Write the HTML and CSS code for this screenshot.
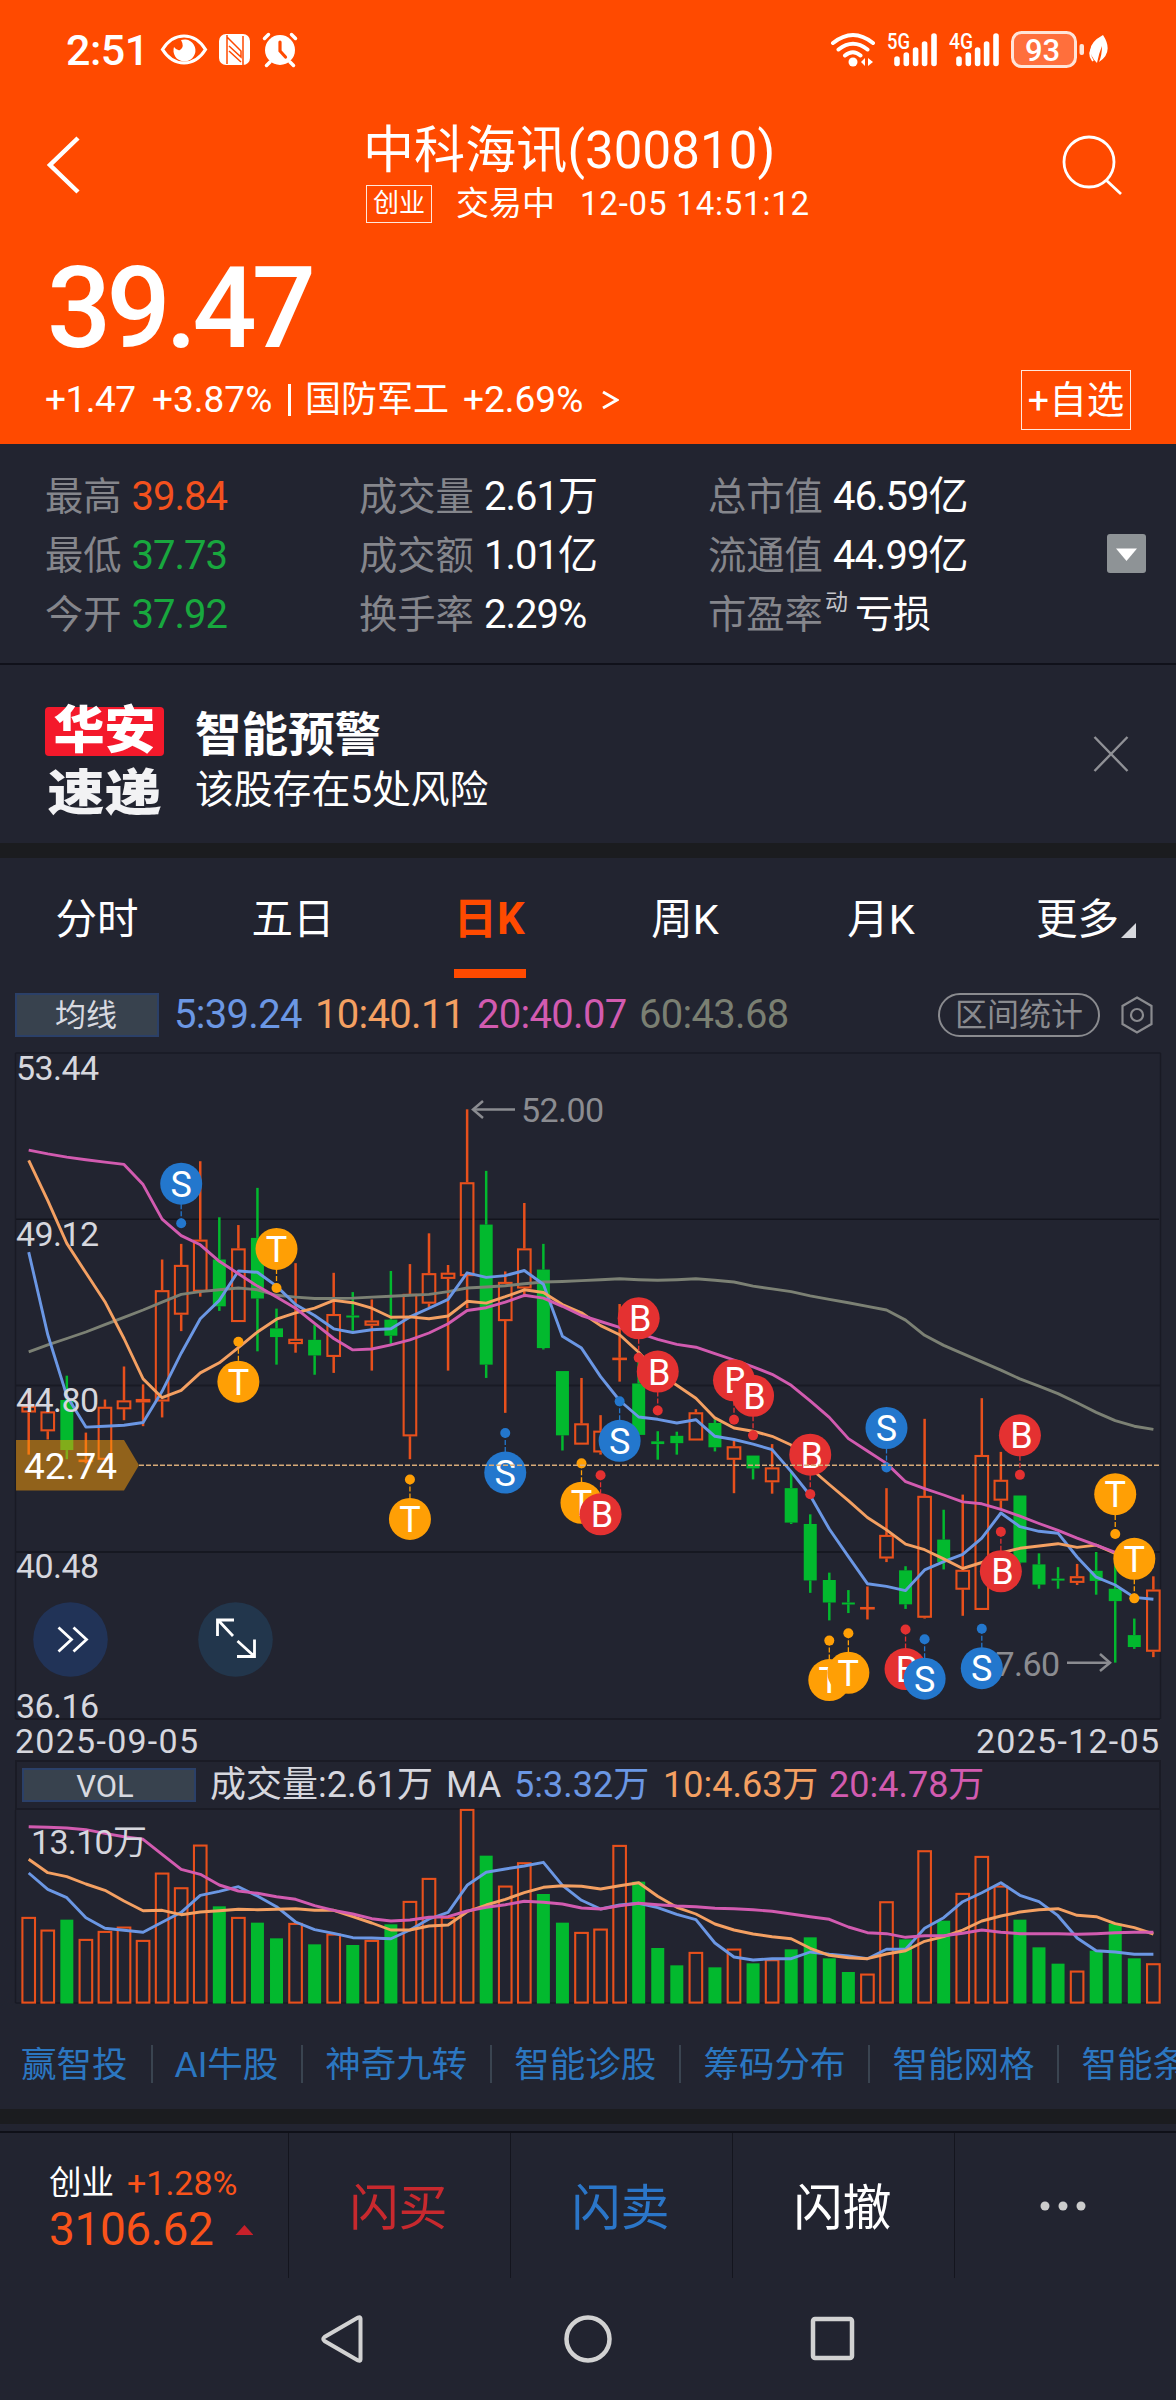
FILE: index.html
```html
<!DOCTYPE html>
<html lang="zh-CN">
<head>
<meta charset="utf-8">
<title>中科海讯(300810)</title>
<link rel="stylesheet" href="styles.css">
</head>
<body>
<header class="hero">
  <div class="statusbar">
    <span class="clock">2:51</span>
    <svg class="status-left" width="140" height="36" viewBox="158 32 140 36">
      <path d="M162.500 49.500Q171 36 184 36Q197 36 205.500 49.500Q197 63 184 63Q171 63 162.500 49.500Z" fill="none" stroke="#fff" stroke-width="3.200"/>
      <path d="M181 40a11 11 0 1 1-7 7q3 4 6 3 5-3 1-10z" fill="#fff"/>
      <rect x="219" y="34" width="31" height="31" rx="7" fill="#fff"/>
      <path d="M227 35V64M227 37L241 51V57L229 46M243 65V36M241 62L229 51" fill="none" stroke="#ff4a00" stroke-width="1.500"/>
      <circle cx="280" cy="50" r="15" fill="#fff"/>
      <path d="M264.500 38.500l4-4M295.500 38.500l-4-4M270 62l-3.500 3.500M290 62l3.500 3.500" stroke="#fff" stroke-width="3.500" stroke-linecap="round"/>
      <path d="M280 42v9l5.500 6" fill="none" stroke="#ff4a00" stroke-width="3.200" stroke-linecap="round"/>
    </svg>
    <svg class="status-right" width="280" height="40" viewBox="830 30 280 40">
      <g fill="none" stroke="#fff" stroke-width="4" stroke-linecap="round">
        <path d="M834 43Q854 27 874 43M839.500 49.500Q854 38 868.500 49.500M846 55.500Q854 49 861.500 55.500"/>
      </g>
      <circle cx="854" cy="62" r="4.500" fill="#fff"/>
      <path d="M862 62l4-4v8zM869 58l5 4-5 4z" fill="#fff"/>
      <g stroke="#fff" stroke-width="5.600" stroke-linecap="round">
        <path d="M898 59v4.500M907.300 55v8.500M916.600 50v13.500M925.600 44v19.500M935 36v27.500"/>
        <path d="M960 59v4.500M969.300 55v8.500M978.600 50v13.500M987.600 44v19.500M997 36v27.500"/>
      </g>
      <text class="net" x="888" y="48.500" textLength="23" lengthAdjust="spacingAndGlyphs">5G</text>
      <text class="net" x="950" y="48.500" textLength="24" lengthAdjust="spacingAndGlyphs">4G</text>
      <rect x="1013.500" y="32.500" width="63" height="34" rx="9" fill="#ff6f3c" stroke="#ffe4d8" stroke-width="3"/>
      <rect x="1080.500" y="44" width="4.500" height="11" rx="2" fill="#ffe4d8"/>
      <text class="battery" x="1026" y="61" textLength="35">93</text>
      <path d="M1104 35Q1082 47 1098 63Q1100 53 1103 46Q1103 55 1100 62Q1115 52 1104 35Z" fill="#fff"/>
      <path d="M1095 46Q1088 53 1094 61" fill="none" stroke="#fff" stroke-width="2"/>
    </svg>
  </div>
  <div class="titlebar">
    <svg class="back" width="40" height="60" viewBox="0 0 40 60"><path d="M33 3L5 30L33 57" fill="none" stroke="#fff" stroke-width="4.500"/></svg>
    <div class="title-block">
      <div class="title">中科海讯(300810)</div>
      <div class="subtitle"><span class="board">创业</span><span class="state">交易中</span><span class="time">12-05 14:51:12</span></div>
    </div>
    <svg class="search" width="62" height="62" viewBox="0 0 62 62"><circle cx="27" cy="27" r="25" fill="none" stroke="#fff" stroke-width="2.800"/><path d="M44 45L59 59" stroke="#fff" stroke-width="2.800"/></svg>
  </div>
  <div class="price">39.47</div>
  <div class="change">
    <span class="c-abs">+1.47</span><span class="c-pct">+3.87%</span><i class="bar"></i><span class="sector">国防军工</span><span class="c-sec">+2.69%</span>
    <svg width="18" height="22" viewBox="0 0 18 22"><path d="M2 3L16 11L2 19" fill="none" stroke="#fff" stroke-width="3"/></svg>
    <button class="add">+自选</button>
  </div>
</header>

<section class="stats">
  <dl><dt>最高</dt><dd class="up">39.84</dd></dl><dl><dt>成交量</dt><dd>2.61万</dd></dl><dl><dt>总市值</dt><dd>46.59亿</dd></dl>
  <dl><dt>最低</dt><dd class="down">37.73</dd></dl><dl><dt>成交额</dt><dd>1.01亿</dd></dl><dl><dt>流通值</dt><dd>44.99亿</dd></dl>
  <dl><dt>今开</dt><dd class="down">37.92</dd></dl><dl><dt>换手率</dt><dd>2.29%</dd></dl><dl><dt>市盈率</dt><dd class="pe"><sup>动</sup>亏损</dd></dl>
  <svg class="toggle" width="39" height="39" viewBox="0 0 39 39"><rect width="39" height="39" rx="3" fill="#8e9396"/><path d="M9 14.500H30L19.500 27Z" fill="#fff"/></svg>
</section>

<section class="alert">
  <div class="logo"><span class="logo-top">华安</span><span class="logo-bottom">速递</span></div>
  <div class="alert-text"><strong>智能预警</strong><p>该股存在5处风险</p></div>
  <svg width="36" height="36" viewBox="0 0 36 36"><path d="M1.500 1L34.500 35M34.500 1L1.500 35" stroke="#909196" stroke-width="2.400"/></svg>
</section>
<div class="band"></div>

<nav class="tabs">
  <a>分时</a><a>五日</a><a class="active">日K</a><a>周K</a><a>月K</a><a class="more">更多<svg width="15" height="15" viewBox="0 0 15 15"><path d="M15 0V15H0Z" fill="#d8d9de"/></svg></a>
</nav>

<div class="ma-row">
  <span class="chip">均线</span>
  <span class="ma m5">5:39.24</span><span class="ma m10">10:40.11</span><span class="ma m20">20:40.07</span><span class="ma m60">60:43.68</span>
  <span class="pill">区间统计</span>
  <svg width="34" height="40" viewBox="0 0 34 40"><path d="M17 2.500L31.500 11V29L17 37.500L2.500 29V11Z" fill="none" stroke="#8a8b8f" stroke-width="2.200"/><circle cx="17" cy="20" r="6" fill="none" stroke="#8a8b8f" stroke-width="2.200"/></svg>
</div>

<svg id="kline" class="chart" width="1176" height="723" viewBox="0 1037 1176 723"></svg>

<div class="vol-row">
  <span class="chip">VOL</span>
  <span class="v v0">成交量:2.61万</span><span class="v vm">MA</span><span class="v m5">5:3.32万</span><span class="v m10">10:4.63万</span><span class="v m20">20:4.78万</span>
</div>
<svg id="volume" class="chart" width="1176" height="196" viewBox="0 1810 1176 196"></svg>

<div class="tools">
  <a>赢智投</a><a>AI牛股</a><a>神奇九转</a><a>智能诊股</a><a>筹码分布</a><a>智能网格</a><a>智能条</a>
</div>
<div class="band"></div>

<footer class="trade">
  <div class="index">
    <div class="index-top"><span>创业</span><span class="pct">+1.28%</span></div>
    <div class="index-value"><span>3106.62</span><i></i></div>
  </div>
  <a class="buy">闪买</a><a class="sell">闪卖</a><a>闪撤</a>
  <a class="dots"><svg width="46" height="10" viewBox="0 0 46 10"><g fill="#ccc"><circle cx="5" cy="5" r="4.500"/><circle cx="23" cy="5" r="4.500"/><circle cx="41" cy="5" r="4.500"/></g></svg></a>
</footer>
<div class="sysnav">
  <svg width="46" height="52" viewBox="0 0 46 52"><path d="M40.500 5.500V46.500Q40.500 48.500 38 47.500L4.500 28Q2 26 4.500 24L38 4.500Q40.500 3.500 40.500 5.500Z" fill="none" stroke="#d2d2d2" stroke-width="4"/></svg>
  <svg width="52" height="52" viewBox="0 0 52 52"><circle cx="26" cy="26" r="21.500" fill="none" stroke="#d2d2d2" stroke-width="4.500"/></svg>
  <svg width="46" height="46" viewBox="0 0 46 46"><rect x="3" y="3" width="39" height="39" rx="2" fill="none" stroke="#d2d2d2" stroke-width="4.500"/></svg>
</div>
<script src="chart.js"></script>
</body>
</html>
```
FILE: styles.css
```css
* { box-sizing: border-box; }
body {
  margin: 0;
  width: 1176px;
  height: 2400px;
  overflow: hidden;
  background: #222430;
  color: #fff;
  font-family: Roboto, "Noto Sans CJK SC", sans-serif;
}
svg { display: block; flex: none; }
dl, dd, p { margin: 0; }
span, a, dt, dd { white-space: nowrap; }

.hero { height: 444px; background: #ff4a00; }
.statusbar { display: flex; height: 100px; padding: 28px 67px 0 66px; }
.clock { width: 92px; font-size: 43px; line-height: 44px; letter-spacing: -0.5px; font-weight: 500; }
.status-left { margin-top: 4px; }
.status-right { margin: 2px 0 0 auto; }
.net { font-size: 22px; font-weight: 500; fill: #fff; }
.battery { font-size: 31px; font-weight: 500; fill: #fff; }

.titlebar { display: flex; align-items: flex-start; height: 124px; padding: 21px 52px 0 45px; }
.back { margin-top: 14px; }
.title-block { flex: 1; padding-left: 278px; }
.title { font-size: 51px; line-height: 60px; letter-spacing: 0.1px; }
.subtitle { display: flex; align-items: center; height: 38px; margin: 4px 0 0 3px; font-size: 33px; line-height: 38px; }
.board { width: 66px; height: 38px; border: 1.500px solid #ffe8dc; font-size: 26px; line-height: 35px; text-align: center; }
.state { margin-left: 24px; }
.time { margin-left: 25px; letter-spacing: 0.8px; }
.search { margin-top: 14px; }

.price { margin-top: 25px; padding-left: 47px; font-size: 113px; line-height: 120px; font-weight: 500; letter-spacing: -4.800px; }
.change { display: flex; align-items: center; height: 60px; margin-top: 1px; padding: 0 45px; font-size: 37px; line-height: 60px; }
.c-abs { width: 107px; letter-spacing: -0.5px; }
.c-pct { width: 136px; letter-spacing: 0; }
.bar { width: 3px; height: 32px; background: #fff; }
.sector { width: 158px; margin-left: 14px; font-size: 36px; }
.c-sec { width: 138px; letter-spacing: 0; }
.add { width: 110px; height: 60px; margin-left: auto; padding: 0; border: 1.500px solid #ffe8dc; background: none; color: #fff; font: inherit; font-size: 37.500px; line-height: 57px; white-space: nowrap; }

.stats {
  position: relative;
  display: grid;
  grid-template-columns: 314px 349px 1fr;
  grid-auto-rows: 59px;
  height: 221px;
  padding: 23px 45px 0;
  border-bottom: 2px solid #10111a;
  line-height: 59px;
}
.stats dl { display: flex; font-size: 40px; }
.stats dt { margin-right: 10px; font-size: 38.300px; color: #85868c; }
.stats dd { letter-spacing: -1px; }
.stats .up { color: #f4511e; }
.stats .down { color: #18a83e; }
.stats .pe { display: flex; margin-left: -8px; letter-spacing: 0; font-size: 38px; }
.stats sup { margin-right: 7px; font-size: 23px; line-height: 36px; color: #c4c5ca; }
.toggle { position: absolute; right: 30px; top: 90px; }

.alert { display: flex; height: 178px; padding: 42px 46px 0 45px; }
.alert > svg { margin: 29px 1px 0 auto; }
.logo { display: flex; flex-direction: column; gap: 12px; width: 119px; margin-right: 31px; font-weight: 900; text-align: center; }
.logo-top { height: 49px; border-radius: 4px; background: #f4192b; font-size: 51px; line-height: 48px; }
.logo-top, .logo-bottom { text-align: center; }
.logo-bottom { font-size: 57px; line-height: 50px; color: #f2f2f4; transform: translateY(1px) scaleY(.86); }
.alert-text strong { display: block; font-size: 46.500px; line-height: 56px; font-weight: 700; }
.alert-text p { font-size: 38.800px; line-height: 54px; }
.band { height: 15px; background: #1b1c1f; }

.tabs { display: grid; grid-template-columns: repeat(6, 196px); height: 120px; font-size: 41.500px; line-height: 60px; text-align: center; }
.tabs a { display: flex; flex-direction: column; align-items: center; padding: 32px 2px 0 0; }
.tabs .active { color: #ff4a00; font-weight: 700; font-size: 43.500px; }
.tabs .active::after { content: ""; width: 72px; height: 9px; margin: 19px 0 0 2px; background: #ff4a00; }
.tabs .more { flex-direction: row; align-items: flex-start; padding-left: 56px; }
.more svg { margin: 33px 0 0 2px; }

.chip { border: 2px solid #2b4068; background: #38424e; color: #d8dae0; text-align: center; }
.ma-row { display: flex; align-items: center; height: 44px; margin-top: 15px; padding: 0 22px 0 15px; font-size: 40px; line-height: 48px; }
.ma-row .chip { width: 144px; height: 44px; margin-right: 15px; padding-right: 2px; font-size: 31px; line-height: 42px; }
.ma { letter-spacing: -0.7px; }
.ma.m5 { width: 141px; }
.ma.m10, .ma.m20 { width: 162px; }
.m5 { color: #6b97e4; }
.m10 { color: #f4a062; }
.m20 { color: #d25bb0; }
.m60 { color: #7a7f72; }
.pill { width: 162px; height: 44px; margin: 0 20px 0 auto; border: 2.500px solid #8a8b8f; border-radius: 22px; color: #8a8b8f; font-size: 32px; line-height: 41px; text-align: center; }

.chart { overflow: visible; }
.axis { font-size: 34px; fill: #d6d7de; }
.peak { font-size: 34px; fill: #8b8c91; }
.tag { font-size: 37px; fill: #fff; }
.marker { font-size: 36px; fill: #fff; text-anchor: middle; }

.vol-row { display: flex; align-items: center; height: 50px; margin: 0 15px 0 15px; border: 2px solid #1a1b25; font-size: 36px; line-height: 48px; }
.vol-row .chip { width: 174px; height: 34px; margin: 0 14px 0 5px; padding-right: 8px; font-size: 31px; line-height: 33px; }
.v { letter-spacing: 0; }
.vol-row .v0, .vol-row .vm { color: #d6d7de; }
.v0 { width: 236px; }
.vm { width: 68px; }
.vol-row .m5 { width: 149px; }
.vol-row .m10 { width: 166px; }

.tools { display: flex; height: 38px; margin: 39px 0 26px; overflow: hidden; font-size: 35.500px; line-height: 40px; color: #2b76c0; }
.tools a { padding: 0 23px 0 22px; border-right: 2.500px solid #3a4450; }
.tools a:first-child { padding-left: 21px; }

.trade { display: grid; grid-template-columns: 288px 222px 222px 222px 222px; height: 147px; margin-top: 7px; border-top: 2px solid #0f1018; }
.trade > a { display: flex; align-items: center; justify-content: center; padding: 0 2px 5px 0; border-left: 1px solid #14151e; font-size: 49px; }
.trade .dots { padding: 0 5px 0 0; }
.trade .buy { color: #c8292e; }
.trade .sell { color: #2b76c8; }
.index { padding: 27px 0 0 49px; color: #f9531a; }
.index-top { display: flex; height: 46px; font-size: 34px; line-height: 46px; letter-spacing: 0; }
.index-top span:first-child { width: 78px; color: #fff; font-size: 32.500px; }
.index-value { display: flex; height: 46px; font-size: 46px; line-height: 46px; letter-spacing: -0.4px; }
.index-value i { margin: 19px 0 0 22px; width: 18px; height: 10px; background: #c8202a; clip-path: polygon(50% 0, 100% 100%, 0 100%); }

.sysnav { display: flex; align-items: center; justify-content: space-between; height: 122px; padding: 0 320px 0 320px; }
```
FILE: chart.js
```js
// Horizontal position of the n-th trading day
const X0 = 28.7, STEP = 19.062;
const xAt = i => X0 + STEP * i;
// Vertical plot units to pixels, for the price and the volume pane
const priceY = v => 1040 + v / 2.1778;
const volY = v => 1740 + v / 3;

const UP = '#e8501c', DOWN = '#02b92e';
const COLORS = { ma5: '#6b97e4', ma10: '#f4a062', ma20: '#d25bb0', ma60: '#7c8174' };
const MARKS = { S: '#2377cd', T: '#ff9f05', B: '#e43131' };
const GRID = '#191a24';

// [rising, body top, body bottom, high, low]
const candles = [
[1,797,811,765,903],[1,809,852,809,870],[0,784,893,731,913],[1,914,918,855,922],[1,799,914,783,914],
[1,785,804,711,828],[1,782,789,750,841],[1,545,787,478,822],[1,490,598,444,634],[1,435,548,264,559],
[0,478,580,386,590],[1,454,614,403,614],[0,431,563,322,678],[0,628,647,585,707],[1,651,662,486,681],
[0,653,687,620,729],[1,597,690,507,725],[0,600,603,549,633],[1,611,622,565,720],[0,609,644,503,662],
[1,553,863,488,913],[1,508,574,421,582],[1,507,520,490,720],[1,310,514,151,584],[0,402,707,285,736],
[1,527,612,504,812],[1,454,541,355,560],[0,500,671,444,674],[0,721,861,721,894],[1,835,881,736,881],
[1,851,898,817,903],[1,692,695,575,744],[0,748,860,690,860],[0,874,880,852,914],[0,862,878,853,903],
[1,811,872,804,872],[0,834,887,826,896],[1,885,914,873,987],[0,905,933,905,957],[1,931,963,880,988],
[0,976,1051,940,1054],[0,1054,1177,1033,1204],[0,1176,1225,1160,1264],[0,1225,1229,1198,1248],[1,1235,1239,1190,1262],
[1,1078,1129,976,1137],[0,1155,1229,1146,1239],[1,993,1258,825,1260],[0,1088,1137,1023,1153],[1,1154,1197,990,1254],
[1,904,1241,780,1241],[1,958,1003,897,1022],[0,992,1138,992,1140],[0,1142,1186,1118,1195],[0,1173,1177,1148,1195],
[1,1168,1182,1141,1187],[0,1156,1178,1115,1208],[0,1195,1222,1140,1356],[0,1296,1322,1260,1326],[1,1197,1332,1168,1344]];

const priceMA = {
ma60: [679,664,650,636,620,604,588,571,554,548,544,540,544,556,560,563,563,562,560,558,556,554,548,540,538,535,531,527,526,524,522,520,522,523,522,520,523,527,536,542,548,557,565,572,580,588,610,643,665,683,701,719,738,754,770,790,811,829,841,848],
ma5: [462,642,775,843,841,839,833,765,682,607,567,503,506,536,576,600,629,637,631,629,603,584,565,507,517,513,502,532,645,671,733,785,821,826,834,827,863,870,880,892,940,992,1065,1125,1184,1190,1199,1154,1136,1120,1085,1030,1060,1070,1074,1126,1170,1187,1214,1218],
ma10: [262,350,443,507,570,650,738,779,763,725,703,670,636,608,594,584,567,572,584,604,603,607,601,569,573,559,544,550,576,594,622,642,680,725,752,780,823,845,852,863,882,932,968,1003,1040,1067,1098,1110,1130,1151,1138,1117,1107,1102,1097,1105,1100,1118,1135,1146],
ma20: [240,248,255,261,266,271,315,390,426,446,482,509,536,560,584,617,650,675,673,664,653,638,618,589,583,571,556,562,580,600,613,626,638,652,663,669,683,697,712,728,752,786,822,868,895,922,962,977,991,1006,1010,1022,1037,1053,1068,1085,1100,1116,1135,1149]
};

// [day, letter, badge height, dot height]
const markers = [[8,'S',313,399],[11,'T',744,657],[13,'T',455,540],[20,'T',1043,957],[25,'S',942,856],[29,'T',1008,922],[30,'B',1033,948],[31,'S',873,787],[32,'B',606,692],[33,'B',722,807],[37,'B',741,827],[38,'B',775,861],[41,'B',903,989],[42,'T',1394,1308],[43,'T',1378,1292],[45,'S',845,931],[46,'B',1370,1284],[47,'S',1391,1305],[50,'S',1368,1282],[51,'B',1157,1071],[52,'B',861,947],[57,'T',989,1076],[58,'T',1130,1216]];

const volumes = [533,571,541,599,575,562,602,400,444,316,501,533,550,597,551,615,583,617,602,555,485,416,533,209,349,439,369,464,550,578,568,317,427,626,678,638,684,628,672,660,630,594,657,698,703,486,600,333,544,461,350,439,541,624,673,694,634,553,657,672];
const volMA = {
ma5: [399,448,473,533,565,571,577,547,517,466,454,440,468,500,546,569,580,593,594,596,570,537,517,436,397,387,378,367,436,481,507,495,490,503,523,539,609,651,660,656,656,636,643,648,656,628,628,565,533,485,458,428,466,485,527,594,632,636,643,643],
ma10: [358,398,410,432,451,483,512,511,524,516,512,508,509,508,506,511,511,530,549,570,570,558,555,515,495,478,458,442,437,439,447,437,428,469,502,522,552,570,582,590,596,625,646,653,656,642,632,604,590,570,543,528,516,509,506,526,530,551,563,582],
ma20: [260,262,264,269,280,290,298,343,388,403,435,453,460,470,478,497,511,522,536,543,540,532,530,513,502,494,484,487,492,504,507,497,490,494,498,500,505,506,509,514,522,530,538,561,578,581,592,587,587,580,570,577,581,581,581,583,581,578,577,577]
};

const line = (x1, y1, x2, y2, c, w, extra = '') => `<path d="M${x1} ${y1}L${x2} ${y2}" stroke="${c}" stroke-width="${w}" fill="none" ${extra}/>`;
const text = (x, y, cls, s, len) => `<text x="${x}" y="${y}" class="${cls}"${len ? ` textLength="${len}"` : ''}>${s}</text>`;
const curve = (vals, toY, c) => `<polyline points="${vals.map((v, i) => xAt(i).toFixed(1) + ',' + toY(v).toFixed(1)).join(' ')}" fill="none" stroke="${c}" stroke-width="2.900" stroke-linejoin="round"/>`;
function box(rising, x, y1, y2) {
  return rising
    ? `<rect x="${x - 6.3}" y="${y1 + .9}" width="12.600" height="${Math.max(y2 - y1 - 1.8, .5)}" fill="none" stroke="${UP}" stroke-width="2.100"/>`
    : `<rect x="${x - 6.5}" y="${y1}" width="13" height="${Math.max(y2 - y1, 2)}" fill="${DOWN}"/>`;
}

let k = line(15.5, 1053, 1160.5, 1053, GRID, 1.5) + line(15.5, 1219.2, 1159, 1219.2, '#13141d', 1.5) + line(15.5, 1385.5, 1160, 1385.5, GRID, 2) + line(15.5, 1552, 1160, 1552, '#13141d', 1.5) + line(15.5, 1719, 1160, 1719, GRID, 2) + line(15.5, 1053, 15.5, 1719, GRID, 1.5) + line(1160.5, 1053, 1160.5, 1719, GRID, 1.5);
candles.forEach(([up, t, b, h, l], i) => {
  const x = xAt(i), c = up ? UP : DOWN;
  if (h < t) k += line(x, priceY(h), x, priceY(t), c, 2.5);
  if (l > b) k += line(x, priceY(b), x, priceY(l), c, 2.5);
  k += box(up, x, priceY(t), priceY(b));
});
for (const m in priceMA) k += curve(priceMA[m], priceY, COLORS[m]);
[['53.44',1080],['49.12',1245.5],['44.80',1411.5],['40.48',1578],['36.16',1718]].forEach(([s, y]) => { k += text(16, y, 'axis', s, 83); });
k += text(15, 1753, 'axis', '2025-09-05', 183) + text(976, 1753, 'axis', '2025-12-05', 183);
k += line(473, 1109.5, 515, 1109.5, '#8b8c91', 2.5) + `<path d="M483 1101L473 1109.500L483 1118" fill="none" stroke="#8b8c91" stroke-width="2.500"/>` + text(521, 1122, 'peak', '52.00', 83);
k += line(1067, 1662.8, 1110, 1662.8, '#8b8c91', 2.5) + `<path d="M1100 1654L1110 1662.800L1100 1671" fill="none" stroke="#8b8c91" stroke-width="2.500"/>` + text(977, 1675.5, 'peak', '37.60', 83);
k += `<path d="M16 1440H124L139 1465.300L124 1490.500H16Z" fill="#ff9f05" fill-opacity=".5"/>` + text(24, 1478.5, 'tag', '42.74', 93);
markers.forEach(([i, s, c, d]) => {
  const x = xAt(i), f = MARKS[s];
  k += line(x, priceY(d), x, priceY(c), f, 1.3, 'stroke-dasharray="5 2"') + `<circle cx="${x}" cy="${priceY(d)}" r="5" fill="${f}"/><circle cx="${x}" cy="${priceY(c)}" r="21" fill="${f}"/>` + text(s === 'B' ? x + 1.5 : x, priceY(c) + 13, 'marker', s);
});
k += line(139, 1465.3, 1159, 1465.3, '#d8ab78', 1.4, 'stroke-dasharray="5 2"');
k += `<circle cx="70.500" cy="1639.500" r="37.300" fill="#213357"/><path d="M58.500 1627.500L71.500 1639.500L58.500 1651.500M73.500 1627.500L86.500 1639.500L73.500 1651.500" fill="none" stroke="#fff" stroke-width="2.800"/>`;
k += `<circle cx="235.500" cy="1639.500" r="37.300" fill="#22364c"/><path d="M217.500 1636V1620H234M218 1620L233 1636M254.500 1639.500V1656.500H237M254 1656L237.500 1641" fill="none" stroke="#fff" stroke-width="2.800"/>`;
document.getElementById('kline').innerHTML = k;

let v = line(15.5, 1810, 15.5, 2003, GRID, 1.5) + line(1160.5, 1810, 1160.5, 2003, GRID, 1.5) + line(15.5, 2003, 1160.5, 2003, GRID, 1.5);
volumes.forEach((t, i) => { v += box(candles[i][0], xAt(i), volY(t - 2), 2003.5); });
v += curve(volMA.ma5, volY, COLORS.ma5) + curve(volMA.ma10, volY, COLORS.ma10) + curve(volMA.ma20, volY, COLORS.ma20);
v += text(31, 1854, 'axis', '13.10万', 116);
document.getElementById('volume').innerHTML = v;
```
